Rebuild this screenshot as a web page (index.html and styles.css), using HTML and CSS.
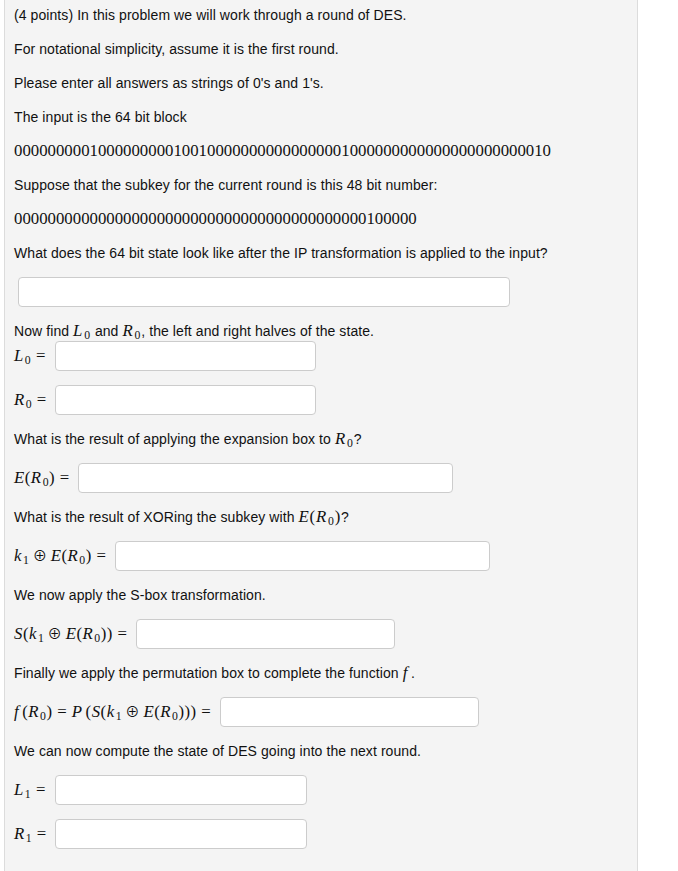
FILE: index.html
```html
<!DOCTYPE html>
<html>
<head>
<meta charset="utf-8">
<link rel="stylesheet" href="styles.css">
</head>
<body>
<div class="panel">
  <p class="txt">(4 points) In this problem we will work through a round of DES.</p>
  <p class="txt">For notational simplicity, assume it is the first round.</p>
  <p class="txt">Please enter all answers as strings of 0's and 1's.</p>
  <p class="txt">The input is the 64 bit block</p>
  <p class="bits">0000000001000000000100100000000000000001000000000000000000000010</p>
  <p class="txt">Suppose that the subkey for the current round is this 48 bit number:</p>
  <p class="bits">000000000000000000000000000000000000000000100000</p>
  <p class="txt">What does the 64 bit state look like after the IP transformation is applied to the input?</p>
  <div class="row"><input class="ans first" type="text"></div>
  <div class="grp">
    <p class="txt">Now find <span class="m in"><span class="v">L</span><span class="sb">0</span></span> and <span class="m in"><span class="v">R</span><span class="sb">0</span></span>, the left and right halves of the state.</p>
    <div class="row"><span class="m lbl"><span class="v">L</span><span class="sb">0</span><span class="eq">=</span></span><input class="ans w-lr" type="text"></div>
  </div>
  <div class="row"><span class="m lbl"><span class="v">R</span><span class="sb">0</span><span class="eq">=</span></span><input class="ans w-lr" type="text"></div>
  <p class="txt">What is the result of applying the expansion box to <span class="m in"><span class="v">R</span><span class="sb">0</span></span>?</p>
  <div class="row"><span class="m lbl"><span class="v">E</span>(<span class="v">R</span><span class="sb">0</span>)<span class="eq">=</span></span><input class="ans w-e" type="text"></div>
  <p class="txt">What is the result of XORing the subkey with <span class="m in"><span class="v">E</span>(<span class="v">R</span><span class="sb">0</span>)</span>?</p>
  <div class="row"><span class="m lbl"><span class="v">k</span><span class="sb">1</span><span class="op">⊕</span><span class="v">E</span>(<span class="v">R</span><span class="sb">0</span>)<span class="eq">=</span></span><input class="ans w-e" type="text"></div>
  <p class="txt">We now apply the S-box transformation.</p>
  <div class="row"><span class="m lbl"><span class="v">S</span>(<span class="v">k</span><span class="sb">1</span><span class="op">⊕</span><span class="v">E</span>(<span class="v">R</span><span class="sb">0</span>))<span class="eq">=</span></span><input class="ans w-s" type="text"></div>
  <p class="txt">Finally we apply the permutation box to complete the function <span class="m in"><span class="v ic">f</span></span>.</p>
  <div class="row"><span class="m lbl"><span class="v ic">f</span>(<span class="v">R</span><span class="sb">0</span>)<span class="eq">=</span><span class="v ic">P</span>(<span class="v">S</span>(<span class="v">k</span><span class="sb">1</span><span class="op">⊕</span><span class="v">E</span>(<span class="v">R</span><span class="sb">0</span>)))<span class="eq">=</span></span><input class="ans w-s" type="text"></div>
  <p class="txt">We can now compute the state of DES going into the next round.</p>
  <div class="row"><span class="m lbl"><span class="v">L</span><span class="sb">1</span><span class="eq">=</span></span><input class="ans w-l1" type="text"></div>
  <div class="row"><span class="m lbl"><span class="v">R</span><span class="sb">1</span><span class="eq">=</span></span><input class="ans w-l1" type="text"></div>
</div>
</body>
</html>
```

FILE: styles.css
```css
body {
  margin: 0;
  background: #ffffff;
  font-family: "Liberation Sans", Arial, Helvetica, sans-serif;
  font-size: 14px;
  color: #111;
}

.panel {
  box-sizing: border-box;
  margin-left: 4px;
  width: 634px;
  min-height: 871px;
  background: #f4f4f4;
  border-left: 1px solid #dcdcdc;
  border-right: 1px solid #dcdcdc;
  padding: 5px 0 0 9px;
  display: flex;
  flex-direction: column;
  gap: 14px;
}

.txt {
  margin: 0;
  line-height: 20px;
  height: 20px;
  white-space: nowrap;
  letter-spacing: 0.08px;
}

.bits {
  margin: 0;
  font-family: "Liberation Serif", "Times New Roman", serif;
  font-size: 16.8px;
  line-height: 20px;
  height: 20px;
  white-space: nowrap;
  letter-spacing: 0;
}

.grp {
  display: flex;
  flex-direction: column;
}

.row {
  display: flex;
  align-items: center;
  height: 30px;
}

.m {
  font-family: "Liberation Serif", "DejaVu Serif", "Times New Roman", serif;
  font-size: 16.8px;
  line-height: 1;
  white-space: nowrap;
  letter-spacing: 0.5px;
}

.in {
  letter-spacing: 0.8px;
}

.v {
  font-style: italic;
}

.ic {
  margin-right: 3px;
}

.sb {
  font-size: 70%;
  position: relative;
  top: 0.25em;
  margin-left: 1px;
}

.eq {
  margin: 0 4.7px;
}

.op {
  font-family: "Noto Sans CJK SC", "DejaVu Sans", serif;
  font-weight: 400;
  font-size: 85%;
  margin: 0 3.3px;
}

.lbl {
  margin-right: 4px;
}

.ans {
  box-sizing: border-box;
  height: 30px;
  margin: 0;
  padding: 4px 6px;
  background: #fff;
  border: 1px solid #cccccc;
  border-radius: 4px;
  font-size: 14px;
  outline: none;
}

.first {
  margin-left: 4px;
  width: 492px;
}

.w-lr { width: 261px; }
.w-e { width: 375px; }
.w-s { width: 259px; }
.w-l1 { width: 252px; }
```
